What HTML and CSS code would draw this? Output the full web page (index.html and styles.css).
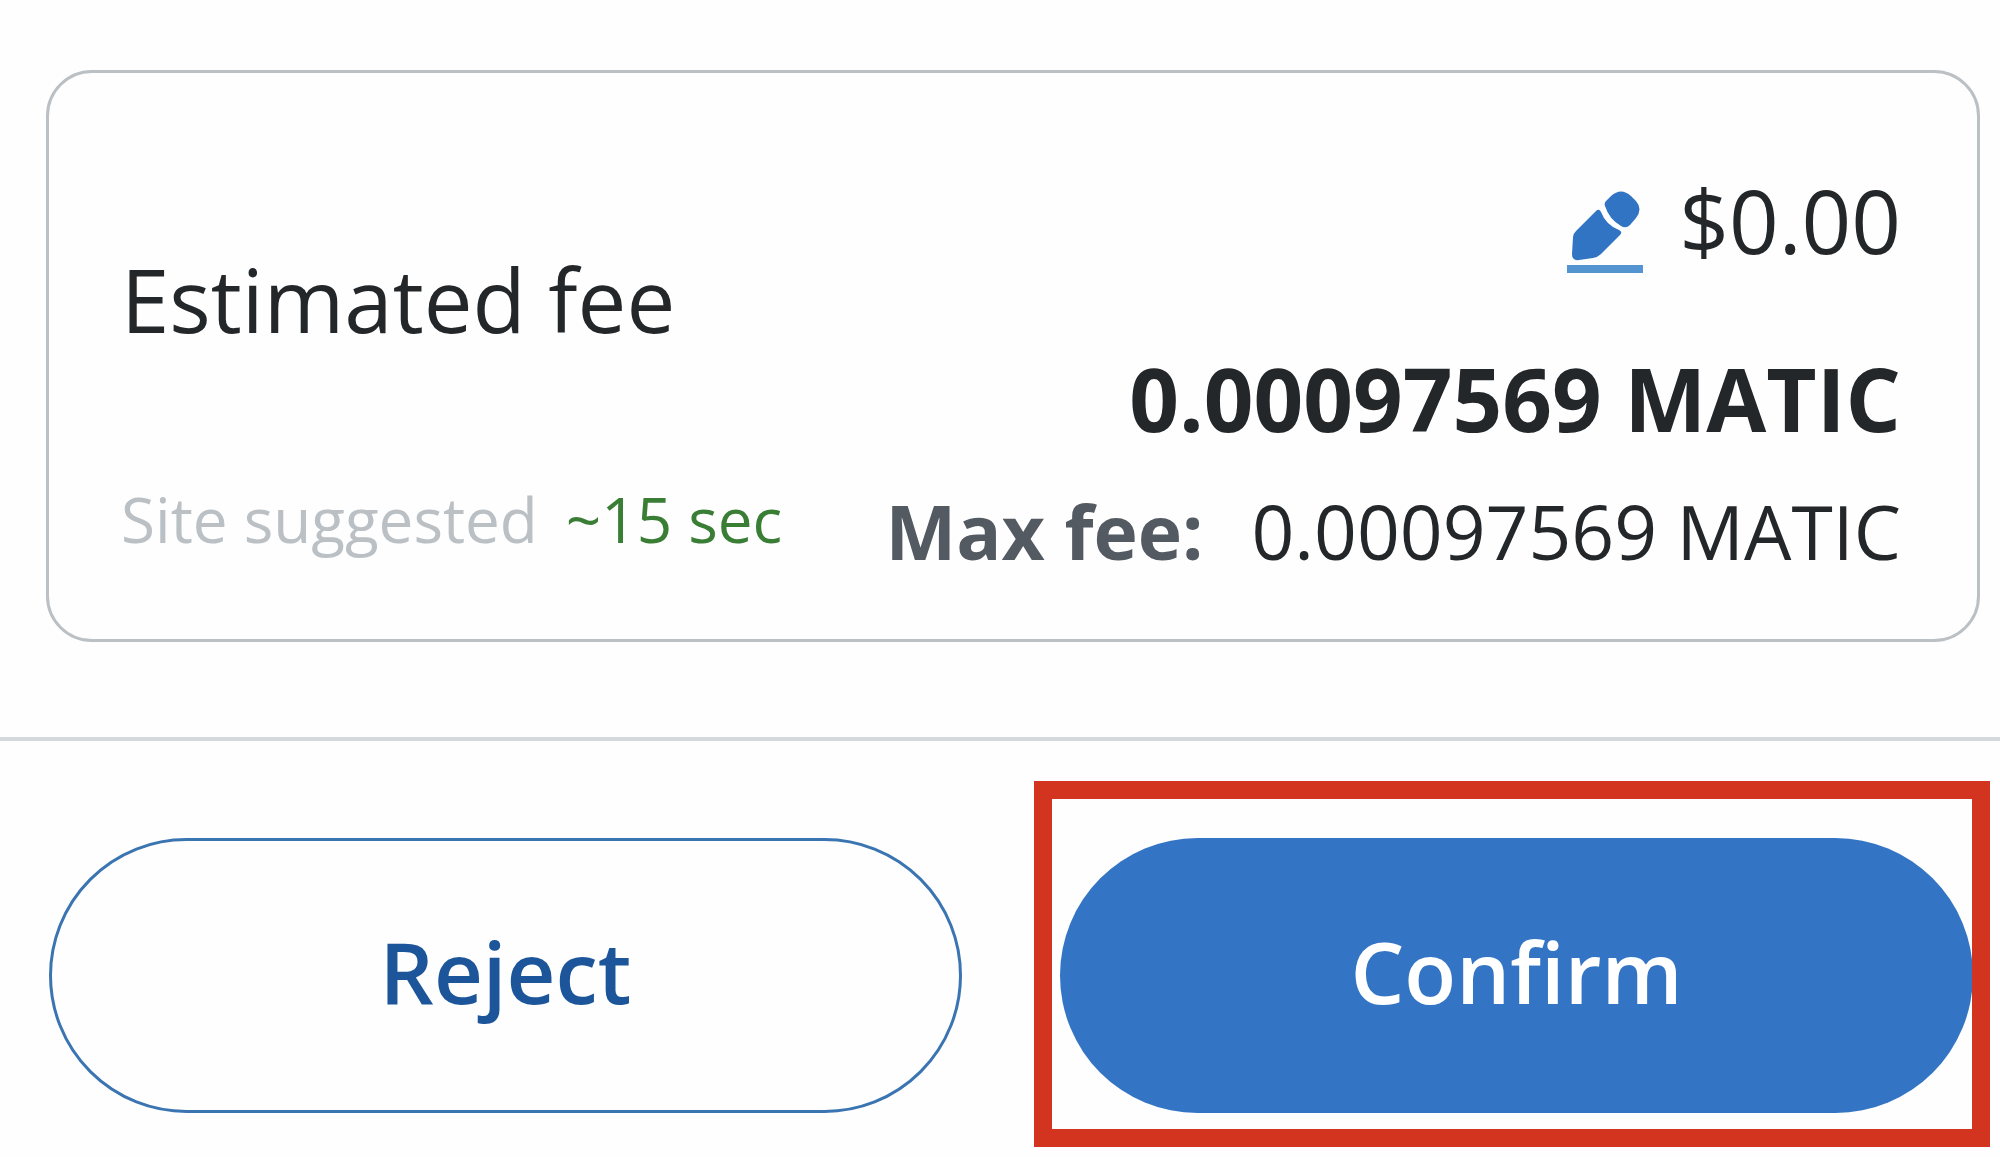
FILE: index.html
```html
<!doctype html>
<html lang="en">
<head>
    <meta charset="utf-8">
    <title>Confirm transaction</title>
    <link rel="stylesheet" href="styles.css">
</head>
<body>
<main class="fee-card">
    <div class="fee-row">
        <h1 class="fee-title">Estimated fee</h1>
        <div class="fee-amounts">
            <div class="fee-fiat">
                <button type="button" class="edit-button" aria-label="Edit fee">
                    <svg class="edit-icon" viewBox="0 0 76 82" aria-hidden="true">
                        <path fill="#3274c4" d="M39 10 L44 5 Q54 -4 64 5 L69 10 Q76 18 69 27 L63 34 Q59 38 54 35 Q42 28 38 15 Q37 12 39 10 Z"/>
                        <path fill="#3274c4" d="M29 20 Q32 17 34 21 Q39 34 52 39 Q56 41 53 44 L34 63 Q31 66 26 67 L12 69 Q5 70 5 63 L6 46 Q6 43 9 40 Z"/>
                        <rect fill="#5494d0" x="0" y="74" width="76" height="8"/>
                    </svg>
                </button>
                <span>$0.00</span>
            </div>
            <strong class="fee-total">0.00097569 MATIC</strong>
        </div>
    </div>
    <div class="fee-row">
        <div class="fee-timing">
            <span>Site suggested</span>
            <span class="fee-time">~15 sec</span>
        </div>
        <div class="fee-max">
            <strong class="fee-max-label">Max fee:</strong>
            <span>0.00097569 MATIC</span>
        </div>
    </div>
</main>
<footer class="actions">
    <button type="button" class="button button-outline">Reject</button>
    <div class="highlight">
        <button type="button" class="button button-primary">Confirm</button>
    </div>
</footer>
</body>
</html>
```

FILE: styles.css
```css
* {
    box-sizing: border-box;
}
body {
    margin: 0;
    background-color: #fefefe;
    color: #24272a;
    font-family: "Open Sans", "Liberation Sans", sans-serif;
    font-variant-ligatures: none;
}
.fee-card {
    margin: 70px 20px 95px 46px;
    padding: 58px 76px 64px 72px;
    border: 3px solid #bbc0c5;
    border-radius: 46px;
}
.fee-row {
    display: flex;
    justify-content: space-between;
    align-items: center;
}
.fee-title {
    margin: 0;
    padding-bottom: 20px;
    font-size: 87px;
    font-weight: 400;
    line-height: 100px;
}
.fee-amounts {
    font-size: 87px;
    line-height: 178px;
    text-align: right;
}
.fee-fiat {
    display: flex;
    justify-content: flex-end;
    align-items: center;
    gap: 36px;
}
.edit-button {
    padding: 24px 0 0;
    border: none;
    background: none;
    cursor: pointer;
}
.edit-icon {
    display: block;
    width: 76px;
    height: 82px;
}
.fee-total {
    display: block;
    font-weight: 700;
}
.fee-timing {
    display: flex;
    gap: 28px;
    padding-bottom: 24px;
    color: #bbc0c5;
    font-size: 62px;
    line-height: 64px;
}
.fee-time {
    color: #3a7d35;
}
.fee-max {
    display: flex;
    gap: 48px;
    font-size: 75px;
    line-height: 88px;
}
.fee-max-label {
    color: #535a61;
}
.actions {
    display: grid;
    grid-template-columns: 1fr 1fr;
    gap: 98px;
    padding: 97px 27px 44px 49px;
    border-top: 4px solid #d6d9dc;
}
.button {
    width: 100%;
    height: 275px;
    padding: 0 0 10px;
    border-radius: 138px;
    font-family: inherit;
    font-size: 85px;
    font-weight: 600;
    cursor: pointer;
}
.button-outline {
    border: 3px solid #3a75b2;
    background-color: transparent;
    color: #1c5599;
}
.button-primary {
    display: block;
    border: none;
    background-color: #3375c4;
    color: #fff;
}
/* red frame over the confirm button */
.highlight {
    position: relative;
}
.highlight::after {
    content: "";
    position: absolute;
    inset: -57px -17px -34px -26px;
    border: 18px solid #d23420;
    pointer-events: none;
}
```
